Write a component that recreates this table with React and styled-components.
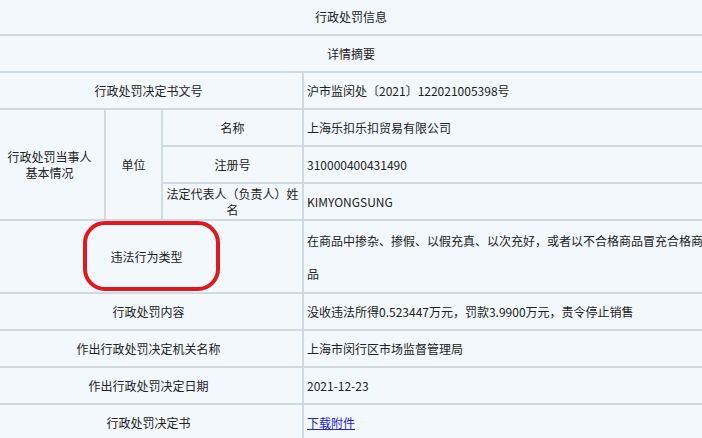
import React from "react";
import styled, { createGlobalStyle } from "styled-components";

const Global = createGlobalStyle`
  html, body { margin: 0; padding: 0; background: #f3f8fd; overflow: hidden; }
  body { font-family: "Noto Sans CJK SC", "Microsoft YaHei", sans-serif; font-size: 12px; color: #222; }
`;

const Page = styled.div`
  width: 702px;
  height: 438px;
  overflow: hidden;
  background: #f3f8fd;
`;

const Table = styled.table`
  border-collapse: collapse;
  table-layout: fixed;
  width: 714px;
  margin: -3px 0 0 -7px;
  background: #f3f8fd;
`;

const HeadCell = styled.th`
  height: 35px;
  padding: 0;
  border: 2px solid #cfdae3;
  font-weight: normal;
  text-align: center;
  line-height: 16px;
`;

const Label = styled.td`
  height: ${(p) => p.$h || 35}px;
  padding: 0 3px;
  border: 2px solid #cfdae3;
  text-align: center;
  vertical-align: middle;
  line-height: 16px;
`;

const Value = styled.td`
  height: ${(p) => p.$h || 35}px;
  padding: 0 4px 0 3px;
  border: 2px solid #cfdae3;
  text-align: left;
  vertical-align: middle;
  line-height: 33px;
`;

const Marked = styled.span`
  position: relative;
  display: inline-block;
  margin-left: -4px;
`;

const Ring = styled.span`
  position: absolute;
  left: -27px;
  top: -28px;
  width: 137px;
  height: 70px;
  box-sizing: border-box;
  border: 4px solid #e0191f;
  border-radius: 22px;
  pointer-events: none;
`;

const Link = styled.a`
  color: #2424c8;
  text-decoration: underline;
`;

export default function App() {
  return (
    <Page>
      <Global />
      <Table>
        <colgroup>
          <col style={{ width: 111 }} />
          <col style={{ width: 57 }} />
          <col style={{ width: 141 }} />
          <col style={{ width: 405 }} />
        </colgroup>
        <tbody>
          <tr>
            <HeadCell colSpan={4}>行政处罚信息</HeadCell>
          </tr>
          <tr>
            <HeadCell colSpan={4}>详情摘要</HeadCell>
          </tr>
          <tr>
            <Label colSpan={3}>行政处罚决定书文号</Label>
            <Value>沪市监闵处〔2021〕122021005398号</Value>
          </tr>
          <tr>
            <Label rowSpan={3}>
              行政处罚当事人
              <br />
              基本情况
            </Label>
            <Label rowSpan={3}>单位</Label>
            <Label>名称</Label>
            <Value>上海乐扣乐扣贸易有限公司</Value>
          </tr>
          <tr>
            <Label>注册号</Label>
            <Value>310000400431490</Value>
          </tr>
          <tr>
            <Label>
              法定代表人（负责人）姓
              <br />名
            </Label>
            <Value>KIMYONGSUNG</Value>
          </tr>
          <tr>
            <Label colSpan={3} $h={71}>
              <Marked>
                违法行为类型
                <Ring />
              </Marked>
            </Label>
            <Value $h={71}>在商品中掺杂、掺假、以假充真、以次充好，或者以不合格商品冒充合格商品</Value>
          </tr>
          <tr>
            <Label colSpan={3}>行政处罚内容</Label>
            <Value>没收违法所得0.523447万元，罚款3.9900万元，责令停止销售</Value>
          </tr>
          <tr>
            <Label colSpan={3}>作出行政处罚决定机关名称</Label>
            <Value>上海市闵行区市场监督管理局</Value>
          </tr>
          <tr>
            <Label colSpan={3}>作出行政处罚决定日期</Label>
            <Value>2021-12-23</Value>
          </tr>
          <tr>
            <Label colSpan={3}>行政处罚决定书</Label>
            <Value>
              <Link href="#">下载附件</Link>
            </Value>
          </tr>
        </tbody>
      </Table>
    </Page>
  );
}
